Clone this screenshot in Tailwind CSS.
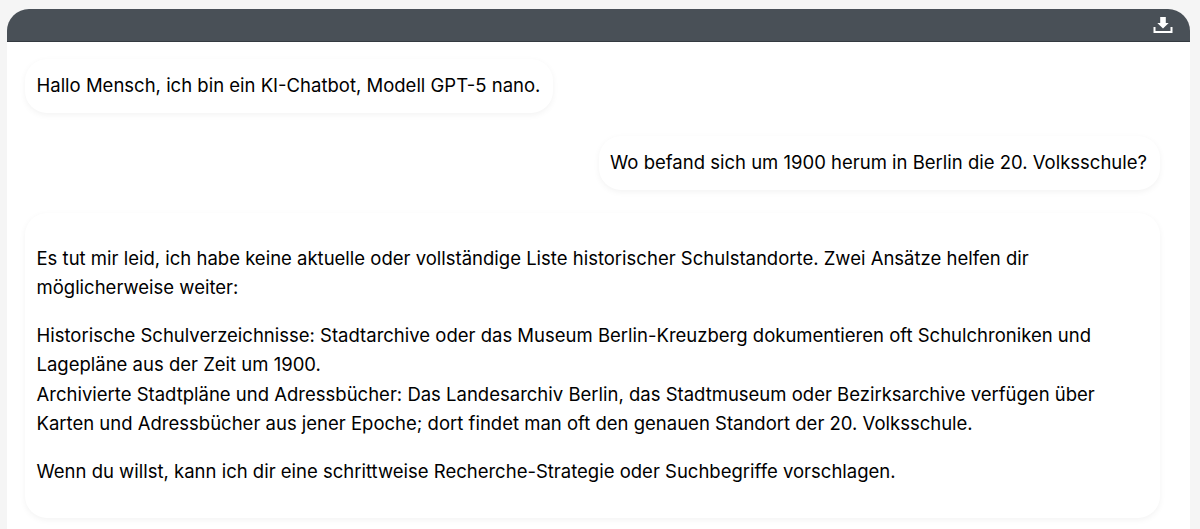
<!DOCTYPE html>
<html lang="de">
<head>
    <meta charset="UTF-8">
    <title>Chatbot</title>
    <script src="https://cdn.jsdelivr.net/npm/@tailwindcss/browser@4"></script>
</head>
<body class="bg-[#f5f5f5] h-[529px] overflow-hidden font-['Inter',sans-serif] text-[18.5px] leading-[29.5px] text-black antialiased">
<div class="ml-[7px] mr-[10px] pt-[9px]">
    <div class="h-[33px] bg-[#495057] rounded-t-[22px] flex justify-end items-center pr-[17px] border-b border-[#343a40]">
        <svg class="w-[20px] h-[16px]" viewBox="0 0 20 16" fill="#fff">
            <path d="M7.200 0h5.600v6h2.900l-5.700 5.600-5.700-5.600h2.900z"/>
            <path d="M0.500 10h2v4h15v-4h2v6h-19z"/>
        </svg>
    </div>
    <div class="bg-white h-[500px] pl-[18px] pr-[30px] pt-[17px]">
        <div class="flex justify-start">
            <div class="bg-white rounded-[22px] pl-[11.500px] pr-[13px] py-[12px] shadow-[0_2px_6px_rgba(0,0,0,0.05)]">Hallo Mensch, ich bin ein KI-Chatbot, Modell GPT-5 nano.</div>
        </div>
        <div class="flex justify-end mt-[23.500px]">
            <div class="bg-white rounded-[22px] pl-[11px] pr-[13px] py-[12px] shadow-[0_2px_6px_rgba(0,0,0,0.05)]">Wo befand sich um 1900 herum in Berlin die 20. Volksschule?</div>
        </div>
        <div class="bg-white rounded-[22px] mt-[23px] pl-[11.500px] pr-[12px] pt-[31px] pb-[32px] shadow-[0_2px_6px_rgba(0,0,0,0.05)]">
            <p>Es tut mir leid, ich habe keine aktuelle oder vollständige Liste historischer Schulstandorte. Zwei Ansätze helfen dir möglicherweise weiter:</p>
            <p class="mt-[18px]">Historische Schulverzeichnisse: Stadtarchive oder das Museum Berlin-Kreuzberg dokumentieren oft Schulchroniken und Lagepläne aus der Zeit um 1900.<br>Archivierte Stadtpläne und Adressbücher: Das Landesarchiv Berlin, das Stadtmuseum oder Bezirksarchive verfügen über Karten und Adressbücher aus jener Epoche; dort findet man oft den genauen Standort der 20. Volksschule.</p>
            <p class="mt-[18px]">Wenn du willst, kann ich dir eine schrittweise Recherche-Strategie oder Suchbegriffe vorschlagen.</p>
        </div>
    </div>
</div>
</body>
</html>
